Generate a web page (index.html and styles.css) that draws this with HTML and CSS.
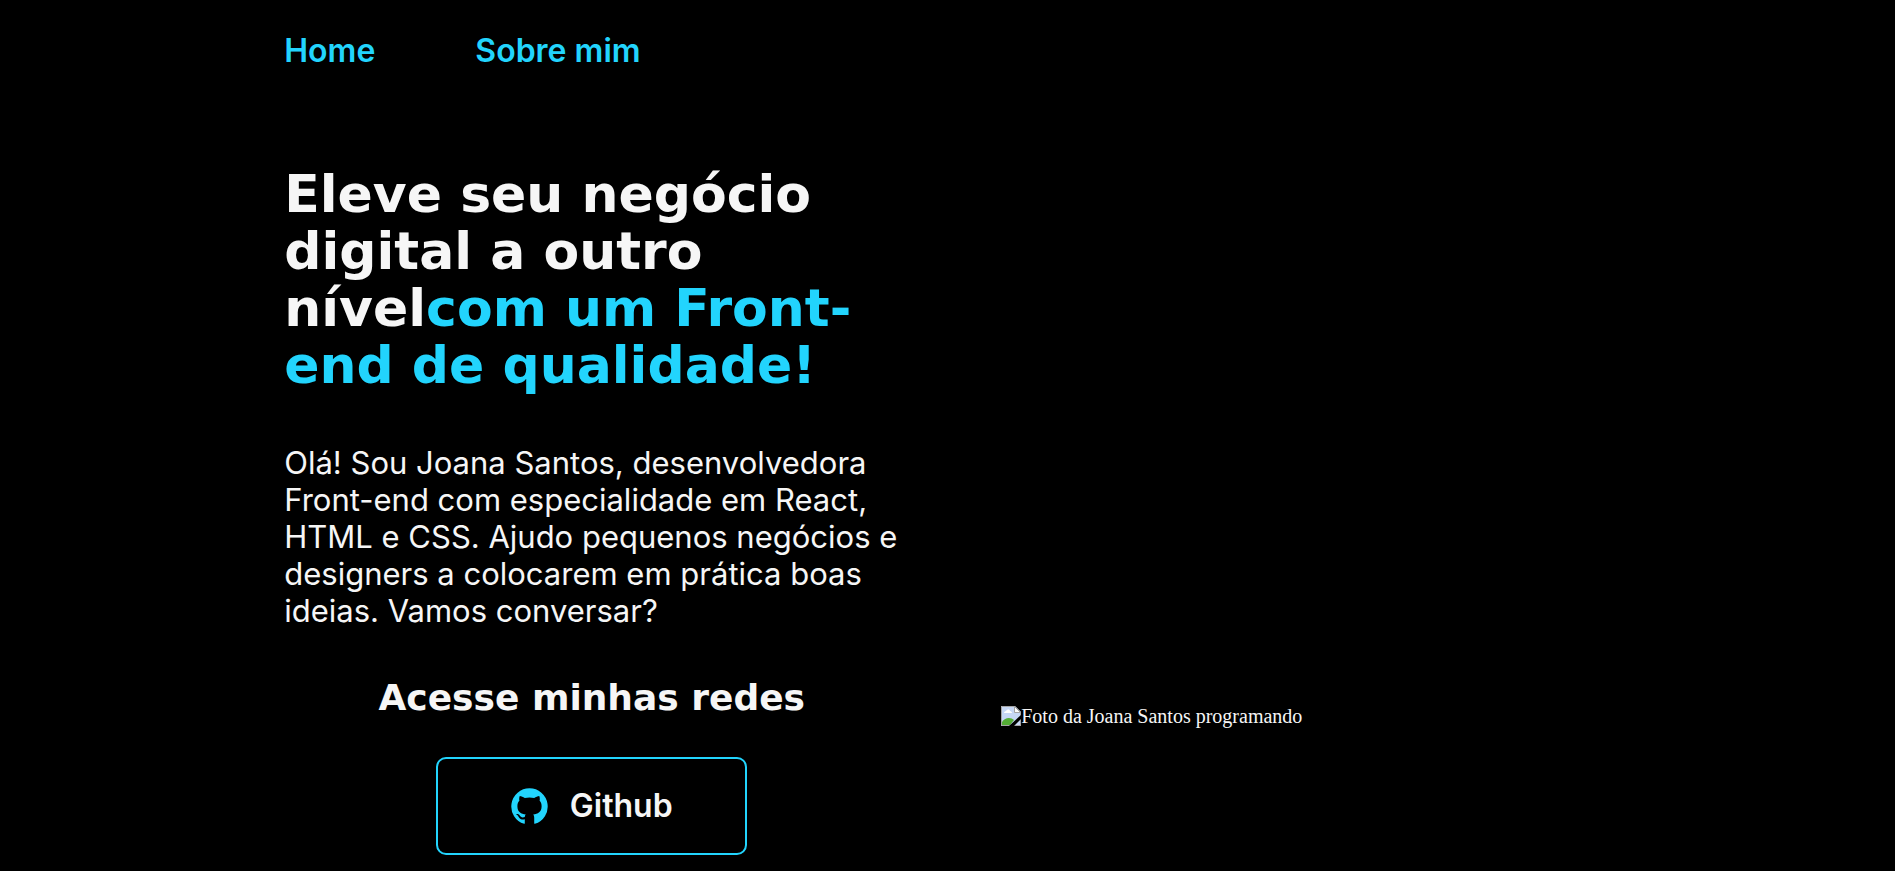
FILE: index.html
```html
<!DOCTYPE html>
<html lang="pt-br">
<head>
<meta charset="utf-8">
<meta name="viewport" content="width=device-width, initial-scale=1">
<title>Portfólio</title>
<link rel="stylesheet" href="styles.css">
</head>
<body>
<header class="header">
  <nav class="menu">
    <a class="menu-link" href="#home">Home</a>
    <a class="menu-link" href="#sobre">Sobre mim</a>
  </nav>
</header>
<main class="intro" id="home">
  <section class="content">
    <h1 class="title">Eleve seu negócio<br>digital a outro<br>nível<strong class="highlight">com um Front-<br>end de qualidade!</strong></h1>
    <p class="text">Olá! Sou Joana Santos, desenvolvedora<br>Front-end com especialidade em React,<br>HTML e CSS. Ajudo pequenos negócios e<br>designers a colocarem em prática boas<br>ideias. Vamos conversar?</p>
    <div class="networks">
      <h2 class="subtitle">Acesse minhas redes</h2>
      <a class="network-link" href="#github">
        <svg class="network-icon" viewBox="0 0 110 110" aria-hidden="true">
          <path fill="currentColor" d="M55 1A54 54 0 0 1 71 106.600Q69 107 69 104V88C69 84 68 81 66 79C80 77 91 71 91 54C91 47 89 42 85 38C86 34 86 29 84 24C79 24 74 27 69 30C60 28 50 28 41 30C36 27 31 24 26 24C24 29 24 34 25 38C21 42 19 47 19 54C19 71 30 77 44 79C42 81 41 83 41 86C34 89 29 87 26 82C23 78 19 77 15 78C20 80 22 85 25 89C29 94 35 94 41 93V104Q41 107 39 106.600A54 54 0 0 1 55 1Z"/>
        </svg>
        Github
      </a>
    </div>
  </section>
  <figure class="photo">
    <svg class="photo-icon" viewBox="0 0 20 20" aria-hidden="true">
      <path fill="#c6d7f5" d="M0 0h14l6 6v14H0z"/>
      <path fill="#fff" d="M3 7c0-1 1-2 2-2 1-2 4-2 4 0 1 0 2 1 2 2z"/>
      <path fill="#54ad35" d="M1 19v-3c3-5 9-5 12-2l-4 5z"/>
      <path fill="none" stroke="#a5a5a5" d="M10 19.500H.5V.5H14L19.500 6v14M10 19.500h9.500"/>
      <path fill="#fff" stroke="#a5a5a5" d="M13.500.5v6h6z"/>
      <path fill="#000" d="M8 20 20 9v4l-7 7z"/>
    </svg>
    <figcaption>Foto da Joana Santos programando</figcaption>
  </figure>
</main>
</body>
</html>
```
FILE: styles.css
```css
* {
  margin: 0;
  padding: 0;
  box-sizing: border-box;
}

body {
  background: #000;
  color: #f6f6f6;
  font-family: Inter, sans-serif;
}

.header {
  padding: 32px 15% 0;
}

.menu {
  display: flex;
  gap: 100px;
}

.menu-link {
  color: #22d4fd;
  font-size: 32px;
  font-weight: 600;
  line-height: 38px;
  text-decoration: none;
}

.intro {
  display: flex;
  gap: 102px;
  padding: 96px 15% 16px;
}

.content {
  display: flex;
  flex: 0 0 auto;
  flex-direction: column;
  gap: 50px;
  width: 615px;
}

.title {
  font-family: "DejaVu Sans", sans-serif;
  font-size: 52px;
  font-weight: 700;
  line-height: 57px;
  white-space: nowrap;
}

.highlight {
  color: #22d4fd;
}

.text {
  font-size: 31px;
  line-height: 37px;
  white-space: nowrap;
}

.networks {
  display: flex;
  flex-direction: column;
  align-items: center;
  gap: 40px;
}

.subtitle {
  font-family: "DejaVu Sans", sans-serif;
  font-size: 36px;
  font-weight: 700;
  line-height: 38px;
}

.network-link {
  display: flex;
  align-items: center;
  justify-content: center;
  gap: 22px;
  width: 311px;
  padding: 28px 0;
  border: 2px solid #22d4fd;
  border-radius: 10px;
  color: #f6f6f6;
  font-size: 32px;
  font-weight: 600;
  line-height: 38px;
  text-decoration: none;
}

.network-icon {
  width: 37px;
  height: 37px;
  color: #22d4fd;
}

.photo {
  display: flex;
  align-self: flex-end;
  align-items: center;
  margin-bottom: 127px;
  font-family: "Liberation Serif", serif;
  font-size: 20px;
  line-height: 24px;
}

.photo-icon {
  width: 20px;
  height: 20px;
}
```
